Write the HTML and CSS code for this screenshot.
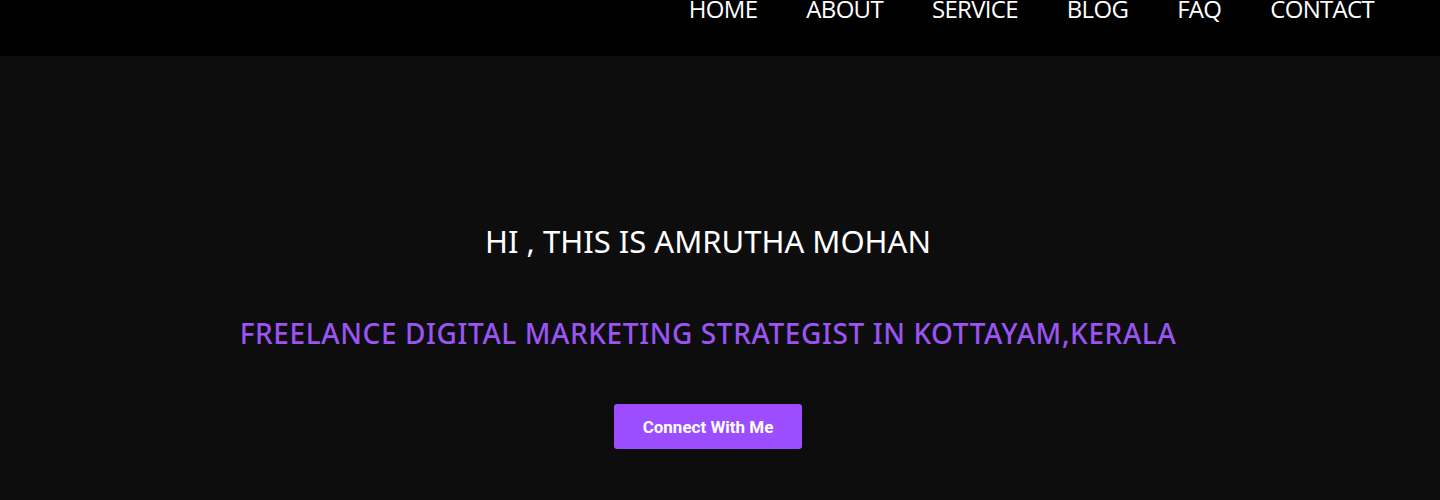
FILE: index.html
```html
<!DOCTYPE html>
<html lang="en">
<head>
<meta charset="utf-8">
<title>Amrutha Mohan</title>
<link rel="stylesheet" href="styles.css">
</head>
<body>
<header class="site-header">
  <nav class="main-nav">
    <a href="#">HOME</a>
    <a href="#">ABOUT</a>
    <a href="#">SERVICE</a>
    <a href="#">BLOG</a>
    <a href="#">FAQ</a>
    <a href="#">CONTACT</a>
  </nav>
</header>
<section class="hero">
  <h1 class="hero-title">HI , THIS IS AMRUTHA MOHAN</h1>
  <h2 class="hero-subtitle">FREELANCE DIGITAL MARKETING STRATEGIST IN KOTTAYAM,KERALA</h2>
  <a class="hero-button" href="#">Connect With Me</a>
</section>
</body>
</html>
```
FILE: styles.css
```css
html, body {
  margin: 0;
  padding: 0;
  background: #0d0d0d;
}

.site-header {
  background: #000;
  height: 56px;
}

.main-nav {
  display: flex;
  justify-content: flex-end;
  align-items: flex-start;
  gap: 49px;
  padding-right: 66px;
}

.main-nav a {
  color: #fff;
  text-decoration: none;
  font-family: "Open Sans", sans-serif;
  font-size: 24px;
  letter-spacing: -0.7px;
  line-height: 18px;
}

.hero {
  display: flex;
  flex-direction: column;
  align-items: center;
  padding: 165px 24px 0 0;
}

.hero-title {
  margin: 0;
  color: #fff;
  font-family: "Noto Sans", sans-serif;
  font-weight: 400;
  font-size: 31px;
  line-height: 40px;
}

.hero-subtitle {
  margin: 52px 0 0;
  color: #9a54f2;
  font-family: "Noto Sans", sans-serif;
  font-weight: 500;
  font-size: 28px;
  letter-spacing: 0.6px;
  line-height: 40px;
}

.hero-button {
  margin-top: 51px;
  width: 188px;
  height: 45px;
  display: flex;
  align-items: center;
  justify-content: center;
  background: #9b4dff;
  border-radius: 3px;
  color: #fff;
  text-decoration: none;
  font-family: Roboto, sans-serif;
  font-weight: 700;
  font-size: 17px;
}
```
